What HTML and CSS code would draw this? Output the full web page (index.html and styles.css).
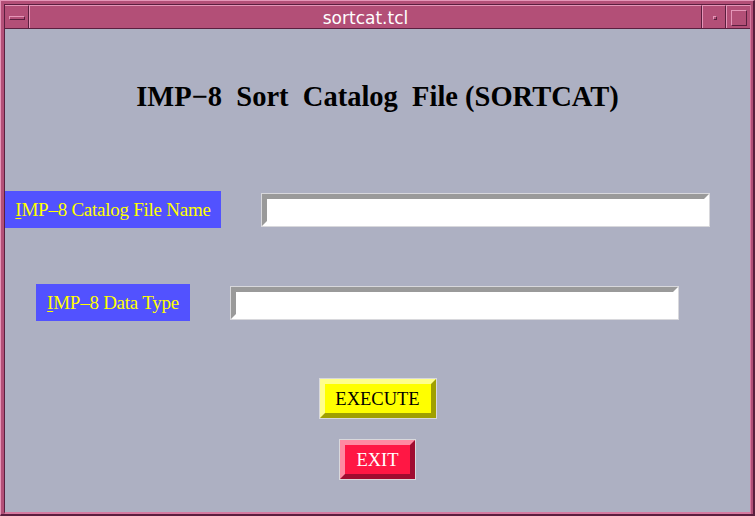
FILE: index.html
```
<!DOCTYPE html>
<html>
<head>
<meta charset="utf-8">
<title>sortcat.tcl</title>
<link rel="stylesheet" href="styles.css">
</head>
<body>
<div class="window">
  <div class="frame">
    <div class="titlebar">
      <div class="seg seg-btn"><span class="min-icon"></span></div>
      <div class="seg seg-title">sortcat.tcl</div>
      <div class="seg seg-btn"><span class="dot-icon"></span></div>
      <div class="seg seg-btn"><span class="max-icon"></span></div>
    </div>
    <div class="content">
      <h1 class="heading">IMP−8  Sort  Catalog  File (SORTCAT)</h1>
      <div class="row row-first">
        <label class="label label-wide"><u>I</u>MP–8 Catalog File Name</label>
        <input class="entry" type="text">
      </div>
      <div class="row row-second">
        <label class="label label-narrow"><u>I</u>MP–8 Data Type</label>
        <input class="entry" type="text">
      </div>
      <button class="btn btn-execute">EXECUTE</button>
      <button class="btn btn-exit">EXIT</button>
    </div>
  </div>
</div>
</body>
</html>
```
FILE: styles.css
```
* { box-sizing: border-box; }
html, body { margin: 0; padding: 0; background: #b34f77; }
.window {
  width: 755px;
  height: 516px;
  background: #b34f77;
  border-top: 1px solid #e596b8;
  border-left: 1px solid #e596b8;
  border-right: 2px solid #5b1f3f;
  border-bottom: 2px solid #5b1f3f;
  padding: 3px 2px 0 3px;
  display: flex;
}
.frame {
  flex: 1;
  display: flex;
  flex-direction: column;
  border-top: 1px solid #5b1f3f;
  border-left: 1px solid #5b1f3f;
  border-right: 1px solid #d77aa0;
  border-bottom: 2px solid #d77aa0;
}
.titlebar {
  height: 24px;
  display: flex;
  border-bottom: 1px solid #5b1f3f;
  background: #b34f77;
}
.seg {
  border-top: 1px solid #e596b8;
  border-left: 1px solid #e596b8;
  border-right: 1px solid #5b1f3f;
  display: flex;
  align-items: center;
  justify-content: center;
}
.seg:first-child { border-left: none; }
.seg-btn { width: 24px; }
.seg-title {
  flex: 1;
  color: #ffffff;
  font-family: "DejaVu Sans", sans-serif;
  font-size: 17px;
  line-height: 22px;
  padding-top: 2px;
}
.seg:last-child { border-right: none; }
.min-icon {
  width: 16px;
  height: 4px;
  border-top: 1px solid #e596b8;
  border-left: 1px solid #e596b8;
  border-bottom: 1px solid #5b1f3f;
  border-right: 1px solid #5b1f3f;
  margin-left: 1px;
  margin-top: 2px;
}
.dot-icon {
  width: 4px;
  height: 4px;
  border-top: 1px solid #e596b8;
  border-left: 1px solid #e596b8;
  border-bottom: 1px solid #5b1f3f;
  border-right: 1px solid #5b1f3f;
  margin-left: 2px;
  margin-top: 2px;
}
.max-icon {
  width: 16px;
  height: 16px;
  border-top: 1px solid #e596b8;
  border-left: 1px solid #e596b8;
  border-bottom: 1px solid #5b1f3f;
  border-right: 1px solid #5b1f3f;
  margin-left: 1px;
  margin-top: 1px;
}
.content {
  flex: 1;
  background: #adb0c2;
  display: flex;
  flex-direction: column;
  align-items: center;
}
.heading {
  margin: 51px 0 0 0;
  font-family: "Liberation Serif", "Times New Roman", serif;
  font-weight: bold;
  font-size: 28.5px;
  line-height: 34px;
  white-space: pre;
  color: #000000;
}
.row {
  align-self: stretch;
  display: flex;
  align-items: center;
  justify-content: center;
  gap: 40px;
  padding-right: 40px;
}
.row-first { margin-top: 77px; }
.row-second { margin-top: 56px; }
.label {
  height: 37px;
  background: #5252ff;
  color: #ffff00;
  font-family: "Liberation Serif", "Times New Roman", serif;
  font-size: 19px;
  letter-spacing: -0.25px;
  line-height: 20px;
  display: flex;
  align-items: center;
  justify-content: center;
  white-space: pre;
}
.label u { text-decoration-thickness: 1px; text-underline-offset: 2px; }
.label-wide { width: 216px; }
.label-narrow { width: 154px; }
.entry {
  width: 447px;
  height: 32px;
  margin: 1px;
  border: 5px solid;
  border-color: #9a9a9a #ffffff #ffffff #9a9a9a;
  box-shadow: 0 0 0 1px #d8d8dc;
  background: #ffffff;
  padding: 0;
  outline: none;
}
.btn {
  height: 39px;
  margin: 1px;
  padding: 0;
  border: 5px solid;
  box-shadow: 0 0 0 1px #d8d8dc;
  font-family: "Liberation Serif", "Times New Roman", serif;
  font-size: 18.5px;
  line-height: 20px;
}
.btn-execute {
  margin-top: 58px;
  width: 116px;
  background: #ffff00;
  color: #000000;
  border-color: #ffff8c #a0a000 #a0a000 #ffff8c;
}
.btn-exit {
  margin-top: 21px;
  width: 75px;
  background: #ff1744;
  color: #ffffff;
  border-color: #ff8aa2 #a00c30 #a00c30 #ff8aa2;
}
```
